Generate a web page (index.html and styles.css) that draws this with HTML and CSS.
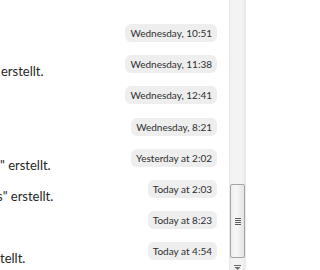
FILE: index.html
```html
<!DOCTYPE html>
<html lang="de">
<head>
<meta charset="utf-8">
<title>Verlauf</title>
<link rel="stylesheet" href="styles.css">
</head>
<body>
<div class="page">
  <main class="log">
    <div class="row">
      <span class="msg"></span>
      <span class="stamp">Wednesday, 10:51</span>
    </div>
    <div class="row">
      <span class="msg msg-a">erstellt.</span>
      <span class="stamp">Wednesday, 11:38</span>
    </div>
    <div class="row">
      <span class="msg"></span>
      <span class="stamp">Wednesday, 12:41</span>
    </div>
    <div class="row">
      <span class="msg"></span>
      <span class="stamp">Wednesday, 8:21</span>
    </div>
    <div class="row">
      <span class="msg">" erstellt.</span>
      <span class="stamp">Yesterday at 2:02</span>
    </div>
    <div class="row">
      <span class="msg msg-b">s" erstellt.</span>
      <span class="stamp">Today at 2:03</span>
    </div>
    <div class="row">
      <span class="msg"></span>
      <span class="stamp">Today at 8:23</span>
    </div>
    <div class="row">
      <span class="msg">tellt.</span>
      <span class="stamp">Today at 4:54</span>
    </div>
  </main>
  <div class="scrollbar">
    <div class="thumb">
      <span class="grip"></span>
      <span class="grip"></span>
      <span class="grip"></span>
      <span class="grip"></span>
    </div>
    <div class="arrow">
      <svg width="7" height="5" viewBox="0 0 7 5"><rect x="0" y="0" width="7" height="1" fill="#6a6a6a"/><polygon points="0.5,2 6.5,2 3.5,5" fill="#6a6a6a"/></svg>
    </div>
  </div>
  <div class="side"></div>
</div>
</body>
</html>
```

FILE: styles.css
```css
html, body {
  margin: 0;
  padding: 0;
  background: #ffffff;
}
body {
  width: 274px;
  height: 270px;
  overflow: hidden;
  font-family: Lato, "Open Sans", sans-serif;
  color: #2b2b2b;
}
.page {
  display: flex;
  height: 270px;
}
.log {
  width: 229px;
  flex: none;
  box-sizing: border-box;
  padding: 24px 12px 0 0;
  overflow: hidden;
}
.row {
  height: 31.2px;
  display: flex;
  justify-content: space-between;
  align-items: flex-start;
}
.msg {
  font-size: 13px;
  line-height: 16px;
  padding-top: 8px;
  white-space: nowrap;
  color: #262626;
}
.msg-a {
  margin-left: 1px;
}
.msg-b {
  margin-left: -3px;
}
.stamp {
  font-size: 10px;
  line-height: 18px;
  height: 18px;
  padding: 0 5px;
  border-radius: 6px;
  background: #eeeeee;
  color: #2e2e2e;
  white-space: nowrap;
}
.scrollbar {
  width: 17px;
  flex: none;
  height: 270px;
  box-sizing: border-box;
  background: linear-gradient(to right, #e6e6e6 0, #eeeeee 1px, #f3f3f3 4px, #f3f3f3 13px, #eaeaea 16px);
  display: flex;
  flex-direction: column;
  justify-content: flex-end;
  align-items: center;
}
.thumb {
  width: 15px;
  height: 74px;
  box-sizing: border-box;
  border: 1px solid #a3a3a3;
  border-radius: 2px;
  background: linear-gradient(to right, #eeeeee, #f7f7f7 40%, #e4e4e4);
  display: flex;
  flex-direction: column;
  justify-content: center;
  align-items: center;
  gap: 1px;
}
.grip {
  display: block;
  width: 6px;
  height: 1px;
  background: #5c5c5c;
}
.arrow {
  height: 12px;
  width: 17px;
  box-sizing: border-box;
  padding-top: 7px;
  display: flex;
  justify-content: center;
  align-items: flex-start;
}
.arrow svg {
  display: block;
}
.side {
  flex: 1;
  background: #ffffff;
}
```
